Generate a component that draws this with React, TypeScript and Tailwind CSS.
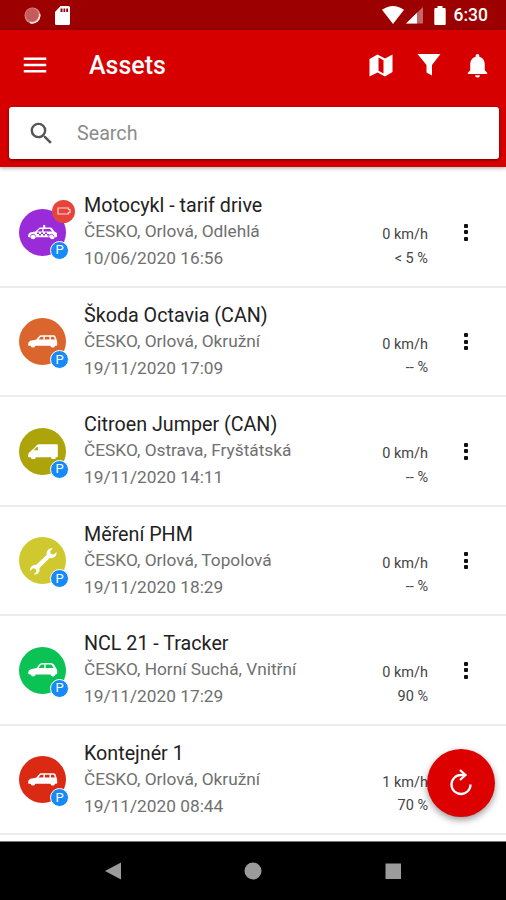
import type { ReactNode } from "react";
import { MdMenu, MdNotifications, MdSearch } from "react-icons/md";

type Vehicle = "taxi" | "wagon" | "van" | "wrench" | "hatch";

interface Asset {
  name: string;
  place: string;
  time: string;
  speed: string;
  battery: string;
  color: string;
  vehicle: Vehicle;
  lowBattery?: boolean;
}

const assets: Asset[] = [
  { name: "Motocykl - tarif drive", place: "ČESKO, Orlová, Odlehlá", time: "10/06/2020 16:56", speed: "0 km/h", battery: "< 5 %", color: "bg-[#9a2bd9]", vehicle: "taxi", lowBattery: true },
  { name: "Škoda Octavia (CAN)", place: "ČESKO, Orlová, Okružní", time: "19/11/2020 17:09", speed: "0 km/h", battery: "-- %", color: "bg-[#db662d]", vehicle: "wagon" },
  { name: "Citroen Jumper (CAN)", place: "ČESKO, Ostrava, Fryštátská", time: "19/11/2020 14:11", speed: "0 km/h", battery: "-- %", color: "bg-[#ada40c]", vehicle: "van" },
  { name: "Měření PHM", place: "ČESKO, Orlová, Topolová", time: "19/11/2020 18:29", speed: "0 km/h", battery: "-- %", color: "bg-[#cfc92f]", vehicle: "wrench" },
  { name: "NCL 21 - Tracker", place: "ČESKO, Horní Suchá, Vnitřní", time: "19/11/2020 17:29", speed: "0 km/h", battery: "90 %", color: "bg-[#0bc255]", vehicle: "hatch" },
  { name: "Kontejnér 1", place: "ČESKO, Orlová, Okružní", time: "19/11/2020 08:44", speed: "1 km/h", battery: "70 %", color: "bg-[#da2a14]", vehicle: "wagon" },
];

const vehicles: Record<Vehicle, ReactNode> = {
  taxi: (
    <svg width="30" height="15" viewBox="0 0 30 15" fill="white" fillRule="evenodd">
      <path d="M15.200 0h2v2.600h5.200q1.200 0 2 1.200l2 2.800 1.800.8q.8.4.8 1.400v2.400q0 1-1 1h-1.200a2.600 2.600 0 0 1-5.100 0H7.600a2.600 2.600 0 0 1-5.100 0H1q-1 0-1-1 .2-2.900 2.200-3.600l5.200-1.200L10.600 3.400q.7-.8 1.800-.8h2.800zM9.400 6.400h4.800V3.900h-1.500q-.9 0-1.500.6zm6.200 0h8.400l-1.500-2q-.4-.5-1-.5h-5.900z" />
      <path d="M9 7.600h2v1.400H9zm4 0h2v1.400h-2zm4 0h2v1.400h-2zM11 9h2v1.400h-2zm4 0h2v1.400h-2zm4 0h2v1.400h-2z" fill="#9a2bd9" />
      <path d="M2.200 11.700a2.900 2.900 0 0 1 5.700 0M20.500 11.700a2.900 2.900 0 0 1 5.700 0" stroke="#9a2bd9" strokeWidth=".8" fill="none" />
    </svg>
  ),
  wagon: (
    <svg width="30" height="13" viewBox="0 0 30 13" fill="white" fillRule="evenodd">
      <path d="M13 .3h12.500q1.500 0 2 1.200l1.200 3.500q.9 2.600.5 4.700-.1 1-1.100 1h-1a2.400 2.400 0 0 1-4.700 0H7.300a2.400 2.400 0 0 1-4.700 0H1q-1 0-1-1 .1-3 2.300-3.900L8 4.700l3.200-3.500q.7-.9 1.800-.9zM10.600 4.400h4.800V1.700h-2q-.7 0-1.100.6zm6.300 0h4.600V1.700h-4.600zm6.100 0h3.900l-.7-2q-.2-.7-1-.7H23z" />
    </svg>
  ),
  van: (
    <svg width="30" height="15" viewBox="0 0 30 15" fill="white" fillRule="evenodd">
      <path d="M11 .2h18q.8 0 .8.800v11.200q0 1-1 1h-1a2.300 2.300 0 0 1-4.600 0H7.600a2.300 2.300 0 0 1-4.600 0H1q-1 0-1-1 0-2.900 1.600-4.300L5.200 5l3.400-3.400Q9.500.2 11 .2zM5.800 6.200h4V2.800q-1 0-1.700.9z" />
    </svg>
  ),
  wrench: (
    <svg width="30" height="30" viewBox="0 0 30 30" fill="white">
      <path d="m8.300 18.700 10.500-10q-.7-3.300 1.800-5.500 1.800-1.500 4.200-.9l-2.600 2.900.6 2.700 2.800.6 2.900-2.600q.5 2.500-1 4.300-2.300 2.400-5.600 1.600L11.500 22q.8 3.200-1.500 5.400-1.800 1.600-4.300 1l2.700-2.800-.7-2.700-2.700-.7L2.200 25q-.5-2.600 1.100-4.400 2.100-2.300 5-1.900z" />
    </svg>
  ),
  hatch: (
    <svg width="30" height="14" viewBox="0 0 30 14" fill="white" fillRule="evenodd">
      <path d="M14.500 0h8.200q2.100 0 3.200 1.600l2.600 4.100q1 1.700.8 4.300-.1 1.400-1.500 1.400h-.4a2.500 2.500 0 0 1-4.900 0H7.700a2.500 2.500 0 0 1-4.900 0H1.700Q0 11.400.1 9.700q.2-2.500 2.500-3.400l6-1.300L11 1.800Q12.400 0 14.500 0zM10.600 5h5.700V1.400h-2.100q-1.200 0-1.900 1zm7 0h8l-1.500-2.500q-.6-1.100-2-1.100h-4.500z" />
    </svg>
  ),
};

const StatusBar = () => (
  <div className="flex h-[30px] items-center bg-[#9c0000] pr-[18px] pl-6 text-white">
    <svg width="17" height="17" viewBox="0 0 17 17">
      <circle cx="8.500" cy="8.500" r="8" fill="#d98484" />
      <circle cx="8" cy="7.800" r="6.600" fill="#c45c5c" />
      <path d="M15.500 7a7.300 7.300 0 0 1-9.500 8.500" stroke="#ffe5e5" strokeWidth="1.500" fill="none" />
    </svg>
    <svg className="ml-[14px]" width="15" height="19" viewBox="0 0 15 19" fill="white" fillRule="evenodd">
      <path d="M5.500 0h8q1.500 0 1.500 1.500v16q0 1.500-1.500 1.500h-12Q0 19 0 17.500V6zM5.500 2.500V6h2V2.500zm3 0V6h1.700V2.500zm2.700 0V6H13V2.500z" />
    </svg>
    <div className="ml-auto flex items-center">
      <svg width="22" height="18" viewBox="0 0 22 18" fill="white">
        <path d="M0 3.800Q11-3.800 22 3.800L11 18z" />
      </svg>
      <svg className="ml-[2px]" width="18" height="18" viewBox="0 0 18 18">
        <path d="M0 17.500 17 1v16.500z" fill="#c56767" />
        <path d="M0 17.500 11 6.800v10.700z" fill="white" />
      </svg>
      <svg className="ml-[10px]" width="12" height="19" viewBox="0 0 12 19" fill="white">
        <path d="M3.500 0h5v2h2.200q1 0 1 1v15q0 1-1 1H1.300q-1 0-1-1V3q0-1 1-1h2.200z" />
      </svg>
      <span className="ml-[8px] text-[17.500px] leading-5 font-medium">6:30</span>
    </div>
  </div>
);

const Header = () => (
  <header className="h-[137px] bg-[#d60000] text-white shadow-[0_1px_4px_rgba(0,0,0,0.35)]">
    <div className="flex h-[70px] items-center pr-[14px] pl-5">
      <MdMenu size={30} />
      <h1 className="ml-[39px] pt-px text-[25px] leading-8 font-medium">Assets</h1>
      <div className="ml-auto flex items-center">
        <svg width="24" height="23" viewBox="0 0 24 23" fill="white" fillRule="evenodd">
          <path d="M.5 5 8.500.5l7.500 4L23.500.5v17.500L16 22.500l-7.500-4-8 4zM9.500 3.500v13.300l5 2.700V6.200z" />
        </svg>
        <svg className="ml-[24px]" width="24" height="22" viewBox="0 0 24 22" fill="white">
          <path d="M.5 0h23L15 11v10.500l-5.500-3V11z" />
        </svg>
        <MdNotifications className="ml-[22px]" size={29} />
      </div>
    </div>
    <div className="mt-[7px] mr-[7px] ml-[9px] flex h-[52px] items-center rounded-[3px] bg-white pl-[18px] shadow-[0_1px_3px_rgba(0,0,0,0.5)]">
      <MdSearch className="text-[#555]" size={29} />
      <span className="ml-[21px] pt-px text-[19.700px] text-[#8c8c8c]">Search</span>
    </div>
  </header>
);

const AssetRow = ({ asset }: { asset: Asset }) => (
  <li className="flex h-[109.500px] border-b-2 border-[#ececec] pl-[19px]">
    <div className={`relative mt-[30.500px] flex h-[47px] w-[47px] items-center justify-center rounded-full ${asset.color}`}>
      {vehicles[asset.vehicle]}
      {asset.lowBattery && (
        <span className="absolute -top-[9px] left-[33px] flex h-[23px] w-[23px] items-center justify-center rounded-full bg-[#e6443a]">
          <svg width="14" height="8" viewBox="0 0 14 8" fill="none" stroke="#ffd5d0" strokeWidth="1.200">
            <path d="M1 1h10.500v1.500H13v3h-1.500V7H1z" />
          </svg>
        </span>
      )}
      <span className="absolute top-[32px] left-[31px] flex h-[19px] w-[19px] items-center justify-center rounded-full border border-white bg-[#168af8] pb-px text-[13px] leading-none text-white">
        P
      </span>
    </div>
    <div className="ml-[18px] pt-[15px] whitespace-nowrap">
      <p className="text-[19.700px] leading-[26px] text-[#222]">{asset.name}</p>
      <p className="text-[17.300px] leading-[25px] text-[#707070]">{asset.place}</p>
      <p className="text-[17.300px] leading-[28px] text-[#707070]">{asset.time}</p>
    </div>
    <div className="ml-auto pt-[45px] text-right text-[14.500px] leading-[23.500px] text-[#444]">
      <p>{asset.speed}</p>
      <p>{asset.battery}</p>
    </div>
    <div className="mt-[45.500px] mr-[38px] ml-[36px] flex flex-col gap-[2.500px]">
      <i className="h-[4px] w-[4px] rounded-[1px] bg-[#111]" />
      <i className="h-[4px] w-[4px] rounded-[1px] bg-[#111]" />
      <i className="h-[4px] w-[4px] rounded-[1px] bg-[#111]" />
    </div>
  </li>
);

const NavBar = () => (
  <nav className="h-[59px] border-t border-[#777] bg-black">
    <svg width="506" height="58" viewBox="0 0 506 58" fill="#9b9b9b">
      <path d="M105 29 121 20.500v17z" />
      <circle cx="253" cy="29" r="8.500" />
      <rect x="385.500" y="21.500" width="15.500" height="15.500" />
    </svg>
  </nav>
);

const App = () => {
  return (
    <div className="relative flex h-[900px] w-[506px] flex-col overflow-hidden bg-white font-[Roboto,sans-serif]">
      <StatusBar />
      <Header />
      <ul className="h-[674px] overflow-hidden pt-[11px]">
        {assets.map((asset) => (
          <AssetRow key={asset.name} asset={asset} />
        ))}
      </ul>
      <NavBar />
      <button className="absolute top-[749px] left-[427px] flex h-[68px] w-[68px] items-center justify-center rounded-full bg-[#dc0000] shadow-[0_3px_7px_rgba(0,0,0,0.4)]">
        <svg width="24" height="28" viewBox="0 0 24 28" fill="none" stroke="white" strokeWidth="2.300">
          <path d="M21.500 15.500a9.500 9.500 0 1 1-9.500-9.500h4" />
          <path d="m11 1 5.500 5-5.500 5" />
        </svg>
      </button>
    </div>
  );
};

export default App;
